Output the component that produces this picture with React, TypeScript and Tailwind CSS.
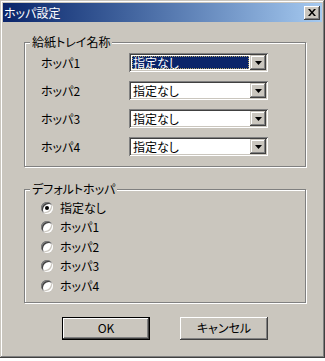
import React from "react";

const hoppers = ["ホッパ1", "ホッパ2", "ホッパ3", "ホッパ4"];
const defaults = ["指定なし", "ホッパ1", "ホッパ2", "ホッパ3", "ホッパ4"];

function ArrowDown() {
  return (
    <svg width="7" height="4" viewBox="0 0 7 4">
      <path d="M0 0h7L3.5 4z" fill="#000" />
    </svg>
  );
}

function Combo({ focused }: { focused?: boolean }) {
  return (
    <div className="flex h-[19px] w-[139px] bg-white p-[2px] shadow-[inset_1px_1px_#808080,inset_-1px_-1px_#fff,inset_2px_2px_#404040,inset_-2px_-2px_#cac6be]">
      <div className="flex flex-1 items-center p-[1px]">
        <div
          className={`flex h-full flex-1 items-center pl-[1px] ${
            focused
              ? "bg-[#0a246a] text-white outline-1 outline-dotted outline-[#b5a66a] -outline-offset-1"
              : "text-black"
          }`}
        >
          指定なし
        </div>
      </div>
      <div className="flex w-[16px] items-center justify-center bg-[#cac6be] shadow-[inset_-1px_-1px_#404040,inset_1px_1px_#cac6be,inset_-2px_-2px_#808080,inset_2px_2px_#fff]">
        <ArrowDown />
      </div>
    </div>
  );
}

function Radio({ checked }: { checked?: boolean }) {
  return (
    <div className="flex h-[12px] w-[12px] items-center justify-center rounded-full bg-white shadow-[inset_1px_1px_#808080,inset_-1px_-1px_#fff,inset_2px_2px_#404040,inset_-2px_-2px_#cac6be]">
      {checked && <div className="h-[4px] w-[4px] rounded-full bg-black" />}
    </div>
  );
}

export default function App() {
  return (
    <div className="h-[358px] w-[325px] bg-[#cac6be] p-[3px] font-['Noto_Sans_CJK_JP',sans-serif] text-[12px] leading-[14px] text-black [font-feature-settings:'palt'] shadow-[inset_-1px_-1px_#404040,inset_1px_1px_#cac6be,inset_-2px_-2px_#808080,inset_2px_2px_#fff]">
      {/* Title bar */}
      <div className="flex h-[19px] items-center justify-between bg-gradient-to-r from-[#0a246a] to-[#a6caf0] pl-[1px] pr-[2px]">
        <span className="text-white">ホッパ設定</span>
        <div className="flex h-[14px] w-[16px] items-center justify-center bg-[#cac6be] shadow-[inset_-1px_-1px_#404040,inset_1px_1px_#fff,inset_-2px_-2px_#808080]">
          <svg width="8" height="7" viewBox="0 0 8 7">
            <path d="M0 0h2l2 2.5L6 0h2L5 3.5 8 7H6L4 4.5 2 7H0l3-3.5z" fill="#000" />
          </svg>
        </div>
      </div>

      {/* 給紙トレイ名称 */}
      <fieldset className="ml-[21px] mt-[13px] w-[282px] border border-[#808080] pb-[10px] pt-[4px] shadow-[1px_1px_0_#fff,inset_1px_1px_0_#fff]">
        <legend className="ml-[5px] bg-[#cac6be] px-[2px]">給紙トレイ名称</legend>
        <div className="flex flex-col gap-[9px]">
          {hoppers.map((h, i) => (
            <div key={h} className="flex h-[19px] items-center">
              <span className="ml-[16px] w-[88px]">{h}</span>
              <Combo focused={i === 0} />
            </div>
          ))}
        </div>
      </fieldset>

      {/* デフォルトホッパ */}
      <fieldset className="ml-[21px] mt-[15px] w-[282px] border border-[#808080] pb-[6px] pt-[2px] shadow-[1px_1px_0_#fff,inset_1px_1px_0_#fff]">
        <legend className="ml-[5px] bg-[#cac6be] px-[2px]">デフォルトホッパ</legend>
        <div className="flex flex-col">
          {defaults.map((d, i) => (
            <div key={d} className="flex h-[19.5px] items-center pl-[16px]">
              <Radio checked={i === 0} />
              <span className="ml-[7px]">{d}</span>
            </div>
          ))}
        </div>
      </fieldset>

      {/* Buttons */}
      <div className="ml-[59px] mt-[14px] flex gap-[30px]">
        <button className="flex h-[23px] w-[88px] items-center justify-center border border-black bg-[#cac6be] shadow-[inset_-1px_-1px_#404040,inset_1px_1px_#fff,inset_-2px_-2px_#808080]">
          OK
        </button>
        <button className="flex h-[23px] w-[88px] items-center justify-center bg-[#cac6be] shadow-[inset_-1px_-1px_#404040,inset_1px_1px_#fff,inset_-2px_-2px_#808080]">
          キャンセル
        </button>
      </div>
    </div>
  );
}
